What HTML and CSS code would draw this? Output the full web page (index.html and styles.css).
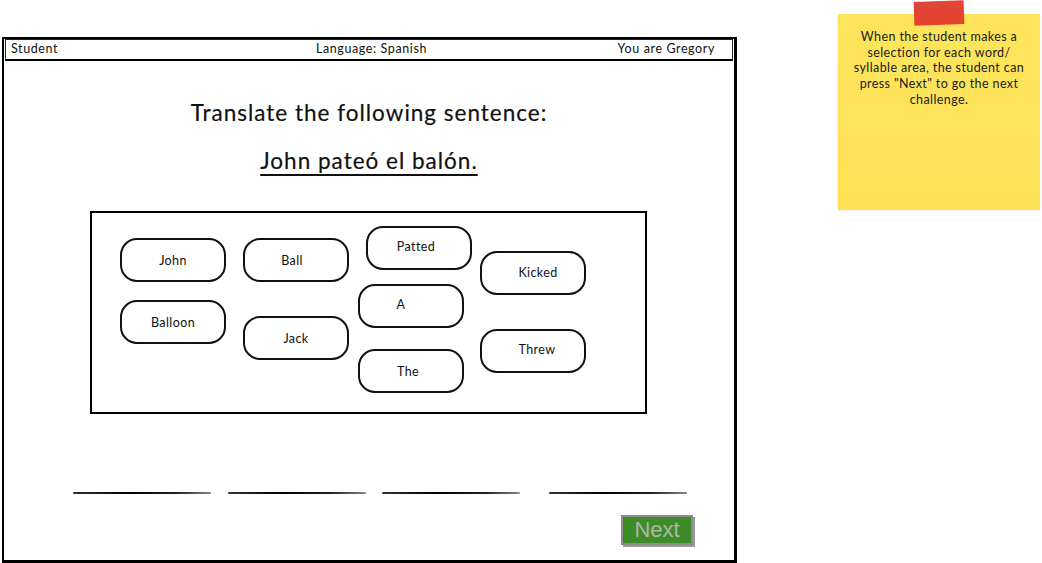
FILE: index.html
```html
<!DOCTYPE html>
<html>
<head>
<meta charset="utf-8">
<link rel="stylesheet" href="styles.css">
</head>
<body>
<div class="page">
  <div class="window">
    <div class="topbar">
      <span class="tb-left">Student</span>
      <span class="tb-mid">Language: Spanish</span>
      <span class="tb-right">You are Gregory</span>
    </div>
    <h1 class="title">Translate the following sentence:</h1>
    <p class="sentence">John pateó el balón.</p>
    <div class="bank">
      <div class="pill p-john"><span>John</span></div>
      <div class="pill p-ball"><span>Ball</span></div>
      <div class="pill p-balloon"><span>Balloon</span></div>
      <div class="pill p-jack"><span>Jack</span></div>
      <div class="pill p-patted"><span>Patted</span></div>
      <div class="pill p-a"><span>A</span></div>
      <div class="pill p-the"><span>The</span></div>
      <div class="pill p-kicked"><span>Kicked</span></div>
      <div class="pill p-threw"><span>Threw</span></div>
    </div>
    <div class="blanks">
      <div class="blank b1"></div>
      <div class="blank b2"></div>
      <div class="blank b3"></div>
      <div class="blank b4"></div>
    </div>
    <div class="actions">
      <div class="next">Next</div>
    </div>
  </div>
  <div class="note">
    <div class="tape"></div>
    <p class="note-text">When the student makes a<br>selection for each word/<br>syllable area, the student can<br>press "Next" to go the next<br>challenge.</p>
  </div>
</div>
</body>
</html>
```
FILE: styles.css
```css
html, body {
  margin: 0;
  padding: 0;
  background: #fff;
}
body {
  font-family: Lato, "Open Sans", sans-serif;
  color: #111;
}
.page {
  display: flex;
  align-items: flex-start;
  width: 1042px;
  height: 563px;
  overflow: hidden;
}
.window {
  margin-top: 37px;
  margin-left: 2px;
  width: 735px;
  height: 526px;
  box-sizing: border-box;
  border: 2px solid #000;
  border-right-width: 3px;
  border-bottom-width: 3px;
  display: flex;
  flex-direction: column;
}
.topbar {
  margin: 0 1px;
  height: 22px;
  box-sizing: border-box;
  border: 1px solid #222;
  border-bottom: 2px solid #000;
  display: grid;
  grid-template-columns: 1fr auto 1fr;
  align-items: center;
  font-size: 12.5px;
  letter-spacing: 0.6px;
  padding: 0 0 2px 5px;
}
.tb-left { text-align: left; }
.tb-mid { text-align: center; }
.tb-right { text-align: right; padding-right: 17px; }
.title {
  margin: 38px 0 0;
  font-weight: 400;
  font-size: 22.5px;
  line-height: 28px;
  text-align: center;
  letter-spacing: 1px;
  -webkit-text-stroke: 0.2px #111;
}
.sentence {
  margin: 20px 0 0;
  font-size: 22.5px;
  line-height: 28px;
  text-align: center;
  text-decoration: underline;
  text-decoration-thickness: 2px;
  text-underline-offset: 5px;
  letter-spacing: 1px;
  -webkit-text-stroke: 0.2px #111;
}
.bank {
  position: relative;
  margin: 36px 0 0 86px;
  width: 557px;
  height: 203px;
  box-sizing: border-box;
  border: 2px solid #000;
  border-bottom-width: 2.5px;
}
.pill {
  position: absolute;
  width: 106px;
  height: 44px;
  box-sizing: border-box;
  border: 2px solid #111;
  border-radius: 17px;
  display: flex;
  align-items: center;
  justify-content: center;
  font-size: 12.5px;
  letter-spacing: 0.4px;
  padding-bottom: 0;
}
.pill span { position: relative; }
.p-john { left: 28px; top: 25px; }
.p-ball { left: 151px; top: 25px; }
.p-ball span { left: -4px; }
.p-balloon { left: 28px; top: 87px; }
.p-jack { left: 151px; top: 103px; }
.p-patted { left: 274px; top: 13px; padding-bottom: 3px; }
.p-patted span { left: -3px; }
.p-a { left: 266px; top: 71px; padding-bottom: 3px; }
.p-a span { left: -10px; }
.p-the { left: 266px; top: 136px; padding-bottom: 0; }
.p-the span { left: -3px; }
.p-kicked { left: 388px; top: 38px; padding-bottom: 1px; }
.p-kicked span { left: 5px; }
.p-threw { left: 388px; top: 116px; padding-bottom: 3px; }
.p-threw span { left: 4px; }
.blanks {
  display: flex;
  margin: 78px 0 0 69px;
}
.blank {
  width: 138px;
  height: 2px;
  background: linear-gradient(90deg, #333 0%, #000 40%, #222 75%, #888 100%);
  border-radius: 1px;
}
.b2 { margin-left: 17px; }
.b3 { margin-left: 16px; }
.b4 { margin-left: 29px; }
.actions {
  display: flex;
  justify-content: flex-end;
  margin-top: 21px;
  padding-right: 41px;
}
.next {
  width: 72px;
  height: 30px;
  box-sizing: border-box;
  background: #3e8c28;
  border: 2px solid #8b8b8b;
  box-shadow: 2px 2px 0 #9a9a9a;
  color: #aeb6a8;
  font-family: "Liberation Sans", Arial, sans-serif;
  font-size: 22px;
  line-height: 26px;
  text-align: center;
}
.note {
  position: relative;
  margin-left: 101px;
  margin-top: 14px;
  width: 202px;
  height: 196px;
  background: linear-gradient(180deg, #fde55a 0%, #fee35c 55%, #fde253 100%);
  box-shadow: 0 1px 2px rgba(0,0,0,0.08);
}
.tape {
  position: absolute;
  left: 76px;
  top: -13px;
  width: 50px;
  height: 24px;
  background: #e23a2d;
  transform: rotate(-2deg);
  opacity: 0.95;
}
.note-text {
  margin: 0;
  padding: 15px 2px 0;
  font-size: 12.5px;
  line-height: 15.7px;
  letter-spacing: 0.4px;
  text-align: center;
  color: #1a1a1a;
}
```
